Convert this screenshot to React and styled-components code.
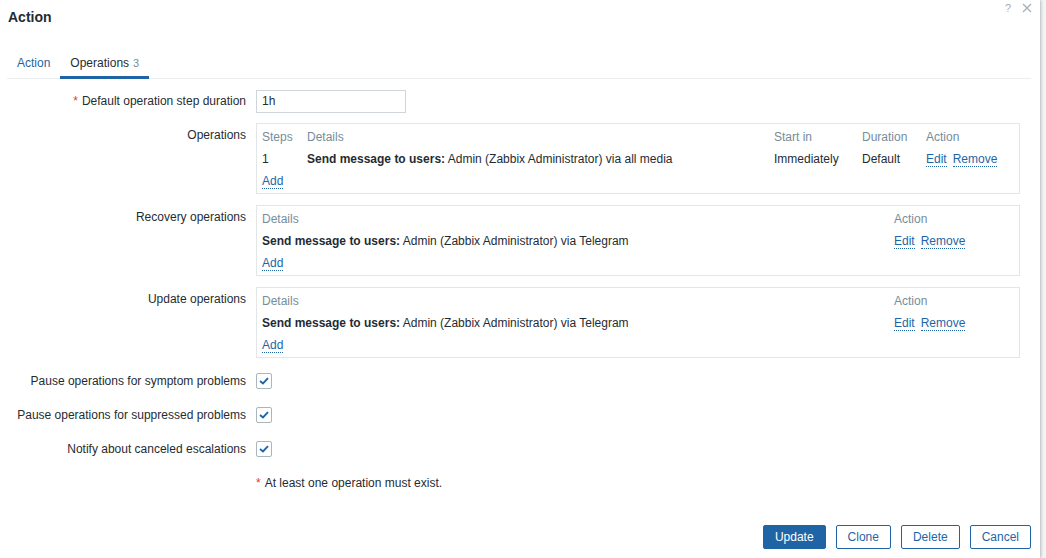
import React from "react";
import styled, { createGlobalStyle } from "styled-components";

const GlobalStyle = createGlobalStyle`
   html, body {
      margin: 0;
      padding: 0;
      background: #f3f4f5;
      font-family: "Liberation Sans", Arial, sans-serif;
      font-size: 12px;
      color: #1f2c33;
   }
`;

const Dialog = styled.div`
   width: 1040px;
   height: 558px;
   background: #fff;
   box-shadow: 1px 0 3px rgba(0, 0, 0, 0.25);
   display: flex;
   flex-direction: column;
   box-sizing: border-box;
`;

const Header = styled.div`
   height: 34px;
   padding: 0 8px;
   display: flex;
   align-items: center;
   justify-content: space-between;
`;

const Title = styled.h4`
   margin: 0;
   font-size: 14px;
   font-weight: bold;
   color: #1f2c33;
`;

const HeaderIcons = styled.div`
   display: flex;
   align-items: flex-start;
   gap: 11px;
   align-self: flex-start;
   padding-top: 2px;
   color: #a5adb3;
`;

const HelpIcon = styled.span`
   font-size: 11px;
   line-height: 12px;
`;

const TabList = styled.div`
   margin: 12px 9px 0 7px;
   display: flex;
   border-bottom: 1px solid #ebeef0;
`;

const Tab = styled.div`
   padding: 9px 10px 5px;
   line-height: 16px;
   margin-bottom: -1px;
   color: ${(p) => (p.active ? "#1f2c33" : "#1f65a6")};
   border-bottom: 3px solid ${(p) => (p.active ? "#1f65a6" : "transparent")};
`;

const Count = styled.span`
   color: #768d99;
   font-size: 11px;
   margin-left: 4px;
`;

const Form = styled.div`
   display: grid;
   grid-template-columns: 246px 764px;
   column-gap: 10px;
   row-gap: 10px;
   padding-top: 10px;
   align-items: start;
`;

const Label = styled.div`
   text-align: right;
   line-height: ${(p) => p.lh || 24}px;
   padding-top: ${(p) => (p.lh ? 1 : 0)}px;
`;

const Req = styled.span`
   color: #e33734;
   margin-right: 4px;
`;

const Field = styled.div`
   display: flex;
   align-items: center;
   min-height: 24px;
`;

const Input = styled.input`
   width: 150px;
   height: 23px;
   box-sizing: border-box;
   border: 1px solid #cfd5d8;
   padding: 0 5px;
   font-family: inherit;
   font-size: 12px;
   color: #1f2c33;
   outline: none;
`;

const Box = styled.div`
   border: 1px solid #e2e6e8;
   padding: 2px 5px 0;
   box-sizing: border-box;
   height: 71px;
   margin-bottom: 1px;
`;

const Row = styled.div`
   display: grid;
   grid-template-columns: ${(p) => p.cols};
   line-height: 22px;
   white-space: nowrap;
`;

const Th = styled.div`
   color: #768d99;
`;

const Link = styled.a`
   color: #1f65a6;
   text-decoration: none;
   border-bottom: 1px dotted #1f65a6;
   margin-right: 6px;
   line-height: 14px;
   cursor: pointer;
`;

const Cell = styled.div``;

const Checkbox = styled.span`
   width: 16px;
   height: 16px;
   box-sizing: border-box;
   border: 1px solid #a9b6bd;
   border-radius: 2px;
   display: flex;
   align-items: center;
   justify-content: center;
`;

const Footer = styled.div`
   margin-top: auto;
   padding: 0 9px 9px 0;
   display: flex;
   justify-content: flex-end;
   gap: 10px;
`;

const Button = styled.button`
   height: 24px;
   padding: 0 11px;
   font-family: inherit;
   font-size: 12px;
   border-radius: 2px;
   border: 1px solid #1f65a6;
   background: ${(p) => (p.primary ? "#1f65a6" : "#fff")};
   color: ${(p) => (p.primary ? "#fff" : "#1f65a6")};
   cursor: pointer;
`;

const Check = () => (
   <Checkbox>
      <svg width="10" height="8" viewBox="0 0 10 8">
         <path d="M1 4 L4 6.5 L9 1.2" fill="none" stroke="#1f65a6" strokeWidth="1.9" />
      </svg>
   </Checkbox>
);

const Actions = () => (
   <Cell>
      <Link>Edit</Link>
      <Link>Remove</Link>
   </Cell>
);

const OpCols = "45px 467px 88px 64px 1fr";
const SubCols = "632px 1fr";

const Message = ({ tail }) => (
   <Cell>
      <b>Send message to users:</b> Admin (Zabbix Administrator) via {tail}
   </Cell>
);

const SubOps = () => (
   <Box>
      <Row cols={SubCols}>
         <Th>Details</Th>
         <Th>Action</Th>
      </Row>
      <Row cols={SubCols}>
         <Message tail="Telegram" />
         <Actions />
      </Row>
      <Row cols={SubCols}>
         <Cell>
            <Link>Add</Link>
         </Cell>
      </Row>
   </Box>
);

const App = () => {
   return (
      <>
         <GlobalStyle />
         <Dialog>
            <Header>
               <Title>Action</Title>
               <HeaderIcons>
                  <HelpIcon>?</HelpIcon>
                  <svg width="10" height="10" viewBox="0 0 10 10" style={{ marginTop: 1 }}>
                     <path d="M1 1 L9 9 M9 1 L1 9" stroke="#a5adb3" strokeWidth="1.2" />
                  </svg>
               </HeaderIcons>
            </Header>
            <TabList>
               <Tab>Action</Tab>
               <Tab active>
                  Operations<Count>3</Count>
               </Tab>
            </TabList>
            <Form>
               <Label>
                  <Req>*</Req>Default operation step duration
               </Label>
               <Field>
                  <Input defaultValue="1h" />
               </Field>

               <Label lh={22}>Operations</Label>
               <Box>
                  <Row cols={OpCols}>
                     <Th>Steps</Th>
                     <Th>Details</Th>
                     <Th>Start in</Th>
                     <Th>Duration</Th>
                     <Th>Action</Th>
                  </Row>
                  <Row cols={OpCols}>
                     <Cell>1</Cell>
                     <Message tail="all media" />
                     <Cell>Immediately</Cell>
                     <Cell>Default</Cell>
                     <Actions />
                  </Row>
                  <Row cols={OpCols}>
                     <Cell>
                        <Link>Add</Link>
                     </Cell>
                  </Row>
               </Box>

               <Label lh={22}>Recovery operations</Label>
               <SubOps />

               <Label lh={22}>Update operations</Label>
               <SubOps />

               <Label>Pause operations for symptom problems</Label>
               <Field>
                  <Check />
               </Field>

               <Label>Pause operations for suppressed problems</Label>
               <Field>
                  <Check />
               </Field>

               <Label>Notify about canceled escalations</Label>
               <Field>
                  <Check />
               </Field>

               <Label />
               <Field>
                  <Req>*</Req>At least one operation must exist.
               </Field>
            </Form>
            <Footer>
               <Button primary>Update</Button>
               <Button>Clone</Button>
               <Button>Delete</Button>
               <Button>Cancel</Button>
            </Footer>
         </Dialog>
      </>
   );
};

export default App;
